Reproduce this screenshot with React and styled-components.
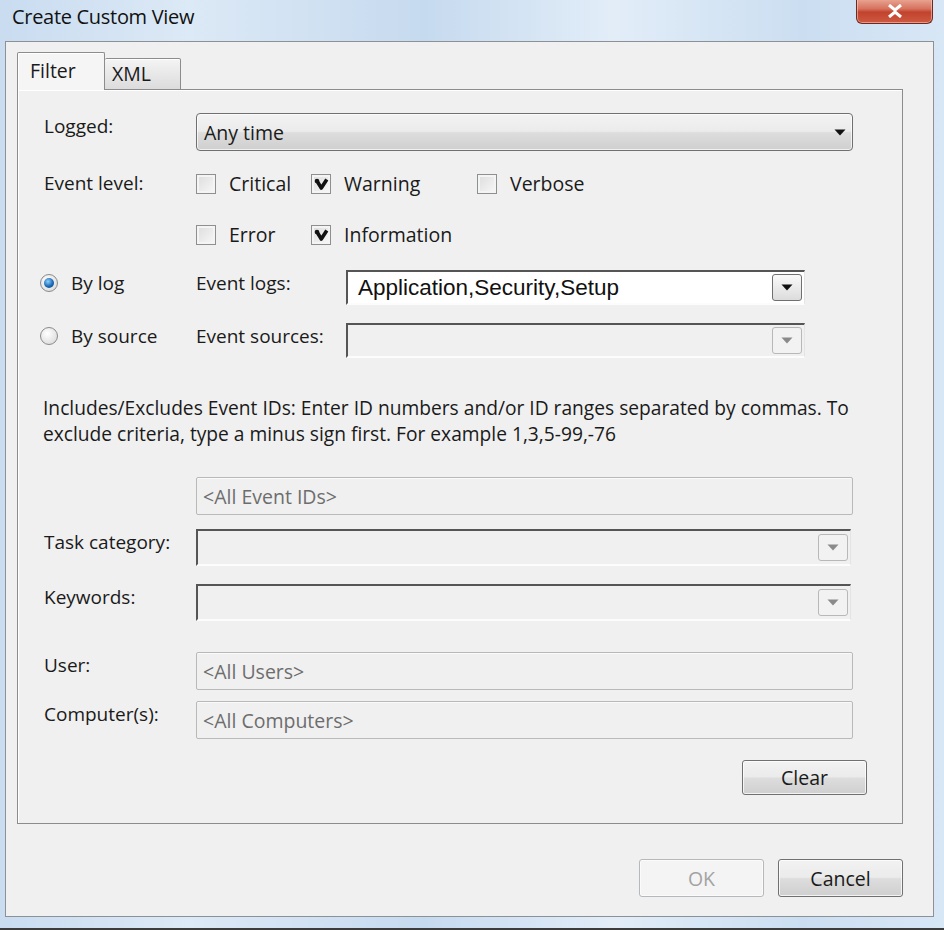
import React from 'react';
import styled, { createGlobalStyle } from 'styled-components';

const GlobalStyle = createGlobalStyle`
  html, body { margin: 0; padding: 0; background: #d6e6f6; }
  body { font-family: "Open Sans", "Noto Sans", sans-serif; color: #1a1a1a; }
`;

const Window = styled.div`
  width: 944px;
  height: 930px;
  box-sizing: border-box;
  display: flex;
  flex-direction: column;
  padding: 0 10px 11px 5px;
  border-bottom: 2px solid #3c3c3c;
  background: linear-gradient(90deg, #c9dcf0 0%, #dce9f6 20%, #c6daef 45%, #e2edf8 65%, #cbdef1 85%, #d8e7f6 100%);
`;

const TitleBar = styled.div`
  height: 41px;
  flex: none;
  display: flex;
  align-items: flex-start;
  justify-content: space-between;
  padding-left: 7px;
`;

const TitleText = styled.span`
  margin-top: 3px;
  font-size: 20px;
  color: #111;
  letter-spacing: -0.3px;
`;

const CloseButton = styled.div`
  width: 77px;
  height: 25px;
  margin: -1px 1px 0 0;
  box-sizing: border-box;
  border: 1px solid #6e2a20;
  border-top: none;
  border-radius: 0 0 6px 6px;
  background: linear-gradient(#e9a896 0%, #d7735e 40%, #c2432d 55%, #cd5a41 100%);
  box-shadow: inset 0 0 0 1px rgba(255, 220, 210, 0.5);
  display: flex;
  align-items: center;
  justify-content: center;
`;

const Client = styled.div`
  flex: 1;
  display: flex;
  flex-direction: column;
  border: 1px solid #8d9196;
  background: #f0f0f0;
  padding: 11px 30px 0 11px;
`;

const TabStrip = styled.div`
  display: flex;
  align-items: flex-end;
  height: 37px;
  margin-bottom: -1px;
`;

const Tab = styled.div`
  box-sizing: border-box;
  width: ${p => p.$w}px;
  height: ${p => (p.$active ? 38 : 32)}px;
  border: 1px solid #8c8c8c;
  border-bottom: ${p => (p.$active ? 'none' : '1px solid #8c8c8c')};
  border-left: ${p => (p.$active ? '1px solid #8c8c8c' : 'none')};
  border-radius: 2px 2px 0 0;
  background: ${p => (p.$active ? '#f5f5f5' : 'linear-gradient(#f4f4f4, #dcdcdc)')};
  box-shadow: ${p => (p.$active ? 'inset 1px 1px 0 #fff' : 'inset 0 1px 0 #fff')};
  padding: ${p => (p.$active ? '4px 0 0 12px' : '1px 0 0 7px')};
  font-size: 19.5px;
  position: relative;
  z-index: ${p => (p.$active ? 1 : 0)};
`;

const Panel = styled.div`
  border: 1px solid #8c8c8c;
  box-shadow: inset 1px 1px 0 #fff;
  padding: 0 0 28px 22px;
  display: flex;
  flex-direction: column;
`;

const Row = styled.div`
  display: flex;
  align-items: flex-start;
  margin-top: ${p => p.$mt}px;
`;

const Label = styled.div`
  width: ${p => p.$w || 156}px;
  flex: none;
  box-sizing: border-box;
  padding-left: ${p => (p.$pl === undefined ? 4 : p.$pl)}px;
  line-height: 26px;
  font-size: 19px;
  white-space: nowrap;
`;

const Dropdown = styled.div`
  width: 657px;
  height: 38px;
  box-sizing: border-box;
  border: 1px solid #707070;
  border-radius: 4px;
  background: linear-gradient(#f3f3f3 0%, #ebebeb 48%, #dddddd 52%, #cfcfcf 100%);
  box-shadow: inset 0 0 0 1px rgba(255, 255, 255, 0.7);
  display: flex;
  align-items: center;
  justify-content: space-between;
  padding: 0 6px 0 7px;
  font-size: 19.5px;
`;

const CheckGrid = styled.div`
  display: grid;
  grid-template-columns: 115px 166px auto;
  align-items: center;
  height: 24px;
`;

const CheckItem = styled.div`
  display: flex;
  align-items: center;
  gap: 13px;
  font-size: 19.5px;
`;

const Box = styled.div`
  width: 20px;
  height: 20px;
  box-sizing: border-box;
  border: 1px solid #8e8f8f;
  background: linear-gradient(135deg, #dcdcdc, #f8f8f8);
  box-shadow: inset 0 0 0 2px #f4f4f4;
  display: flex;
  align-items: center;
  justify-content: center;
`;

const RadioGroup = styled.div`
  width: 156px;
  flex: none;
  display: flex;
  align-items: center;
  gap: 13px;
  height: 26px;
  font-size: 19px;
`;

const RadioCircle = styled.div`
  width: 18px;
  height: 18px;
  box-sizing: border-box;
  border-radius: 50%;
  border: 1px solid #8a8a8a;
  background: radial-gradient(circle at 40% 35%, #ffffff, #d4d4d4);
  display: flex;
  align-items: center;
  justify-content: center;
`;

const RadioDot = styled.div`
  width: 10px;
  height: 10px;
  border-radius: 50%;
  background: radial-gradient(circle at 40% 35%, #8fd0fa, #1b6ab8 55%, #0f3a68);
`;

const SunkenCombo = styled.div`
  width: ${p => p.$w}px;
  height: ${p => p.$h}px;
  box-sizing: border-box;
  border-top: 2px solid #555;
  border-left: 2px solid #555;
  border-right: 1px solid #e4e4e4;
  border-bottom: 2px solid #fcfcfc;
  background: ${p => (p.$enabled ? '#fff' : '#f0f0f0')};
  display: flex;
  align-items: center;
  justify-content: space-between;
  padding: 0 2px 0 10px;
  font-family: "Liberation Sans", Arial, sans-serif;
  font-size: 22.5px;
  color: #111;
`;

const ComboButton = styled.div`
  width: 30px;
  height: 27px;
  box-sizing: border-box;
  border: 1px solid ${p => (p.$enabled ? '#707070' : '#b8b8b8')};
  border-radius: 3px;
  background: ${p => (p.$enabled ? 'linear-gradient(#fafafa, #dcdcdc)' : '#f2f2f2')};
  display: flex;
  align-items: center;
  justify-content: center;
`;

const TextBox = styled.div`
  width: 657px;
  height: 38px;
  box-sizing: border-box;
  border: 1px solid #b9b9b9;
  border-radius: 2px;
  box-shadow: inset 0 1px 0 #fafafa;
  background: #f0f0f0;
  display: flex;
  align-items: center;
  padding-left: 6px;
  font-size: 19.5px;
  color: #6d6d6d;
`;

const Description = styled.div`
  padding-left: 3px;
  font-size: 19.2px;
  line-height: 26px;
  white-space: nowrap;
`;

const ButtonRow = styled.div`
  display: flex;
  justify-content: flex-end;
  gap: ${p => p.$gap || 0}px;
  margin-top: ${p => p.$mt}px;
  padding-right: ${p => p.$pr || 0}px;
`;

const Button = styled.div`
  width: ${p => p.$w || 125}px;
  height: ${p => p.$h || 38}px;
  box-sizing: border-box;
  border: 1px solid ${p => (p.$disabled ? '#b5b9bc' : '#707070')};
  border-radius: 3px;
  background: ${p => (p.$disabled ? '#f4f4f4' : 'linear-gradient(#f2f2f2 0%, #ebebeb 48%, #dddddd 52%, #cfcfcf 100%)')};
  box-shadow: inset 0 0 0 1px ${p => (p.$disabled ? '#fbfbfb' : 'rgba(255,255,255,0.75)')};
  color: ${p => (p.$disabled ? '#a3a3a3' : '#1a1a1a')};
  display: flex;
  align-items: center;
  justify-content: center;
  font-size: 19.5px;
`;

const Arrow = ({ color = '#111' }) => (
  <svg width="12" height="7" viewBox="0 0 12 7">
    <path d="M0.5 0.5 H11.5 L6 6.5 Z" fill={color} />
  </svg>
);

const CheckMark = () => (
  <svg width="15" height="14" viewBox="0 0 15 14">
    <circle cx="3" cy="4" r="2.3" fill="#111" />
    <path d="M3 4 L7.3 11 L12.8 2.5" stroke="#111" strokeWidth="3.6" fill="none" strokeLinejoin="round" />
  </svg>
);

const Check = ({ label, checked }) => (
  <CheckItem>
    <Box>{checked && <CheckMark />}</Box>
    <span>{label}</span>
  </CheckItem>
);

const Radio = ({ label, selected }) => (
  <RadioGroup>
    <RadioCircle>{selected && <RadioDot />}</RadioCircle>
    <span>{label}</span>
  </RadioGroup>
);

const Combo = ({ w, h, text, enabled }) => (
  <SunkenCombo $w={w} $h={h} $enabled={enabled}>
    <span>{text}</span>
    <ComboButton $enabled={enabled}>
      <Arrow color={enabled ? '#111' : '#8a8a8a'} />
    </ComboButton>
  </SunkenCombo>
);

export default function App() {
  return (
    <>
      <GlobalStyle />
      <Window>
        <TitleBar>
          <TitleText>Create Custom View</TitleText>
          <CloseButton>
            <svg width="16" height="14" viewBox="0 0 16 14">
              <path d="M2 1 L8 6 L14 1 M2 13 L8 8 L14 13" stroke="#fff" strokeWidth="3" fill="none" />
            </svg>
          </CloseButton>
        </TitleBar>
        <Client>
          <TabStrip>
            <Tab $active $w={88}>Filter</Tab>
            <Tab $w={76}>XML</Tab>
          </TabStrip>
          <Panel>
            <Row $mt={23}>
              <Label>Logged:</Label>
              <Dropdown>
                <span>Any time</span>
                <Arrow />
              </Dropdown>
            </Row>
            <Row $mt={19}>
              <Label>Event level:</Label>
              <CheckGrid>
                <Check label="Critical" />
                <Check label="Warning" checked />
                <Check label="Verbose" />
              </CheckGrid>
            </Row>
            <Row $mt={25}>
              <Label />
              <CheckGrid>
                <Check label="Error" />
                <Check label="Information" checked />
              </CheckGrid>
            </Row>
            <Row $mt={25}>
              <Radio label="By log" selected />
              <Label $w={150} $pl={0}>Event logs:</Label>
              <Combo w={459} h={35} text="Application,Security,Setup" enabled />
            </Row>
            <Row $mt={18}>
              <Radio label="By source" />
              <Label $w={150} $pl={0}>Event sources:</Label>
              <Combo w={459} h={35} />
            </Row>
            <Row $mt={37}>
              <Description>
                Includes/Excludes Event IDs: Enter ID numbers and/or ID ranges separated by commas. To
                <br />
                exclude criteria, type a minus sign first. For example 1,3,5-99,-76
              </Description>
            </Row>
            <Row $mt={30}>
              <Label />
              <TextBox>&lt;All Event IDs&gt;</TextBox>
            </Row>
            <Row $mt={14}>
              <Label>Task category:</Label>
              <Combo w={655} h={37} />
            </Row>
            <Row $mt={18}>
              <Label>Keywords:</Label>
              <Combo w={655} h={37} />
            </Row>
            <Row $mt={31}>
              <Label>User:</Label>
              <TextBox>&lt;All Users&gt;</TextBox>
            </Row>
            <Row $mt={11}>
              <Label>Computer(s):</Label>
              <TextBox>&lt;All Computers&gt;</TextBox>
            </Row>
            <ButtonRow $mt={21} $pr={35}>
              <Button $w={125} $h={35}>Clear</Button>
            </ButtonRow>
          </Panel>
          <ButtonRow $mt={35} $gap={14}>
            <Button $disabled $w={125}>OK</Button>
            <Button $w={125}>Cancel</Button>
          </ButtonRow>
        </Client>
      </Window>
    </>
  );
}
